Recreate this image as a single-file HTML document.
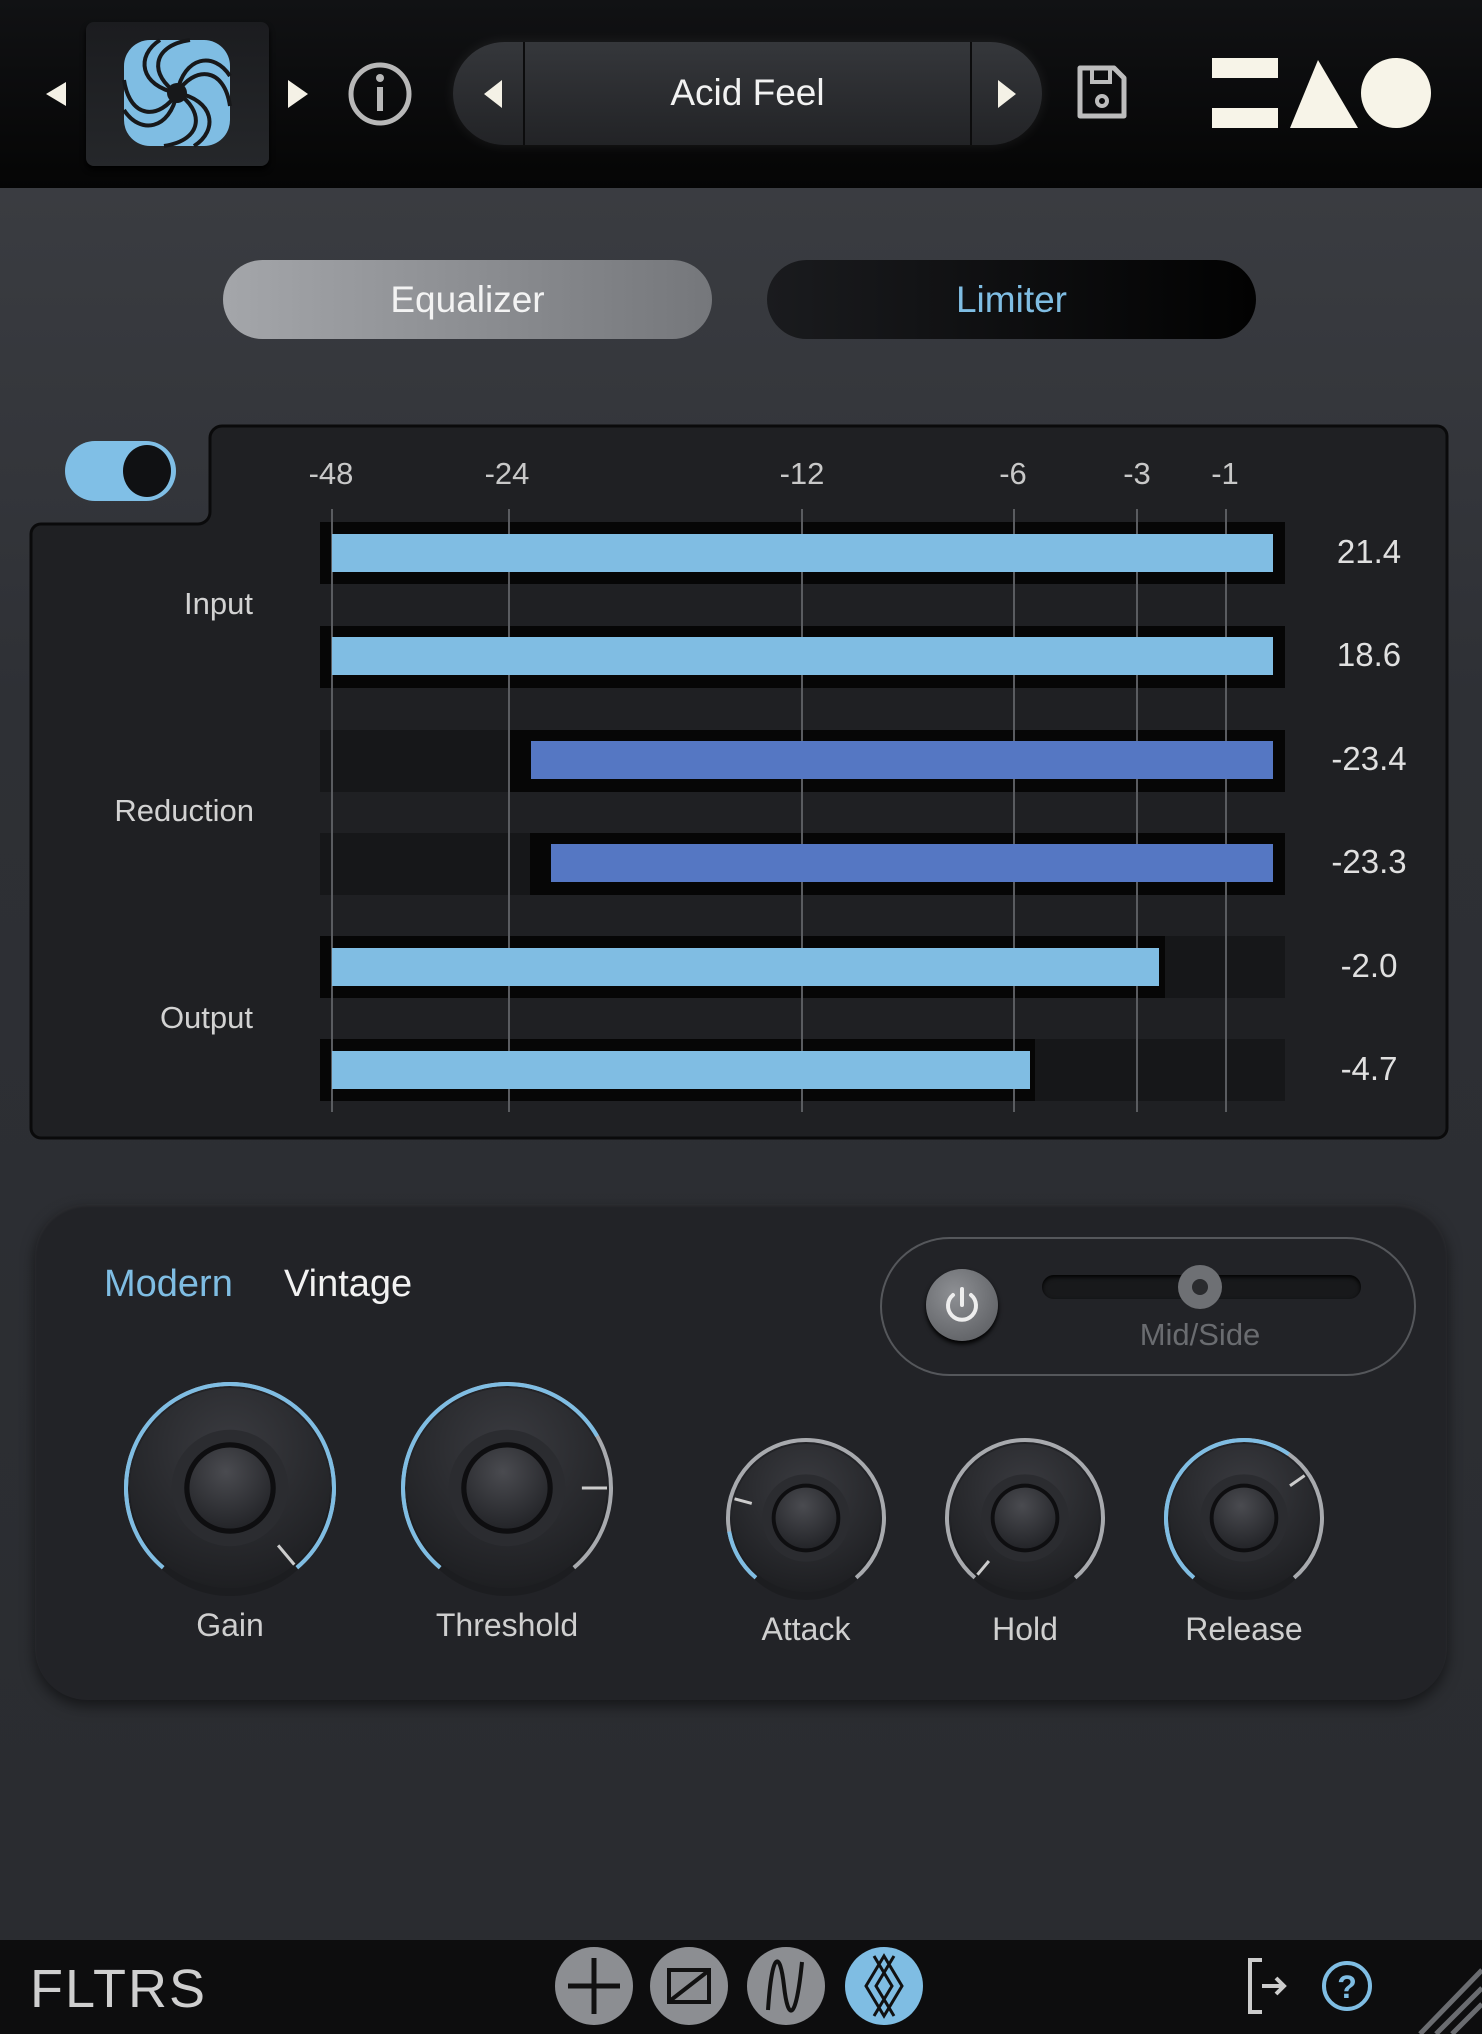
<!DOCTYPE html>
<html><head><meta charset="utf-8"><style>
*{margin:0;padding:0;box-sizing:border-box}
body{width:1482px;height:2034px;overflow:hidden;background:linear-gradient(180deg,#3a3c41 190px,#2e3035 700px,#2a2c30 1900px);font-family:"Liberation Sans",sans-serif;position:relative}
.a{position:absolute}
.t{position:absolute;white-space:nowrap}
</style></head><body>
<!-- header -->
<div class="a" style="left:0;top:0;width:1482px;height:188px;background:linear-gradient(180deg,#111214,#050505)"></div>
<div class="a" style="left:86px;top:22px;width:183px;height:144px;border-radius:8px;background:linear-gradient(180deg,#1b1c1f,#25272a);box-shadow:0 4px 6px #000"></div>
<div class="a" style="left:453px;top:42px;width:589px;height:103px;border-radius:52px;background:linear-gradient(180deg,#35373b,#222326);box-shadow:0 0 14px rgba(255,255,255,.08)"></div>
<div class="a" style="left:523px;top:42px;width:2px;height:103px;background:#0c0c0d"></div>
<div class="a" style="left:970px;top:42px;width:2px;height:103px;background:#0c0c0d"></div>
<svg class="a" style="left:0;top:0" width="1482" height="188">
<polygon points="66,82 46,94 66,106" fill="#f4f1e6"/>
<polygon points="288,80 308,94 288,108" fill="#f4f1e6"/>
<circle cx="380" cy="94" r="29" fill="none" stroke="#b8b8b8" stroke-width="5"/>
<circle cx="380" cy="78" r="4" fill="#b8b8b8"/><rect x="377" y="87" width="6" height="24" fill="#b8b8b8"/>
<polygon points="502,80 484,94 502,108" fill="#f4f1e6"/>
<polygon points="998,80 1016,94 998,108" fill="#f4f1e6"/>
<path d="M1080 68 h34 l10 10 v38 h-44 z" fill="none" stroke="#bdbdbd" stroke-width="5" stroke-linejoin="round"/>
<rect x="1092" y="68" width="18" height="14" fill="none" stroke="#bdbdbd" stroke-width="4"/>
<circle cx="1102" cy="101" r="5" fill="none" stroke="#bdbdbd" stroke-width="4"/>
<rect x="1212" y="58" width="66" height="20" fill="#f7f4e8"/>
<rect x="1212" y="108" width="66" height="20" fill="#f7f4e8"/>
<polygon points="1290,128 1318,60 1358,128" fill="#f7f4e8"/>
<ellipse cx="1396" cy="93" rx="35" ry="35" fill="#f7f4e8"/>
</svg>
<svg class="a" style="left:120px;top:36px" width="114" height="114" viewBox="0 0 114 114">
<rect x="4" y="4" width="106" height="106" rx="26" fill="#7fbde3"/>
<g fill="none" stroke="#17181a" stroke-width="4">
<path d="M57 57 C30 40 30 10 70 4"/><path d="M57 57 C74 30 104 30 110 70"/><path d="M57 57 C84 74 84 104 44 110"/><path d="M57 57 C40 84 10 84 4 44"/>
<path d="M57 57 C20 50 15 20 40 4"/><path d="M57 57 C64 20 94 15 110 40"/><path d="M57 57 C94 64 99 94 74 110"/><path d="M57 57 C50 94 20 99 4 74"/>
</g><circle cx="57" cy="57" r="10" fill="#17181a"/></svg>
<div class="t" style="left:525px;width:445px;top:72px;text-align:center;color:#f2f2f2;font-size:37px">Acid Feel</div>

<!-- tabs -->
<div class="a" style="left:223px;top:260px;width:489px;height:79px;border-radius:40px;background:linear-gradient(90deg,#a4a6aa,#75777b)"></div>
<div class="t" style="left:223px;width:489px;top:279px;text-align:center;color:#f3f3f3;font-size:37px">Equalizer</div>
<div class="a" style="left:767px;top:260px;width:489px;height:79px;border-radius:40px;background:linear-gradient(90deg,#1a1b1e,#020202)"></div>
<div class="t" style="left:767px;width:489px;top:279px;text-align:center;color:#7fbde3;font-size:37px">Limiter</div>

<!-- meter panel -->
<svg class="a" style="left:0;top:0" width="1482" height="1150">
<path d="M222 426 H1437 a10 10 0 0 1 10 10 V1128 a10 10 0 0 1 -10 10 H41 a10 10 0 0 1 -10 -10 V534 a10 10 0 0 1 10 -10 H198 a12 12 0 0 0 12 -12 V438 a12 12 0 0 1 12 -12 z" fill="#1f2023" stroke="#0a0a0b" stroke-width="3"/>
<rect x="65" y="441" width="111" height="60" rx="30" fill="#80bfe6"/>
<ellipse cx="147" cy="471" rx="24" ry="26" fill="#101113"/>
<g fill="#161719">
<rect x="320" y="522" width="965" height="62"/><rect x="320" y="626" width="965" height="62"/><rect x="320" y="730" width="965" height="62"/><rect x="320" y="833" width="965" height="62"/><rect x="320" y="936" width="965" height="62"/><rect x="320" y="1039" width="965" height="62"/>
</g>
<g fill="#060606">
<rect x="320" y="522" width="965" height="62"/><rect x="320" y="626" width="965" height="62"/>
<rect x="510" y="730" width="775" height="62"/><rect x="530" y="833" width="755" height="62"/>
<rect x="320" y="936" width="845" height="62"/><rect x="320" y="1039" width="715" height="62"/>
</g>
<g stroke="#5a5c60" stroke-width="2">
<line x1="332" y1="509" x2="332" y2="1112"/><line x1="509" y1="509" x2="509" y2="1112"/><line x1="802" y1="509" x2="802" y2="1112"/><line x1="1014" y1="509" x2="1014" y2="1112"/><line x1="1137" y1="509" x2="1137" y2="1112"/><line x1="1226" y1="509" x2="1226" y2="1112"/>
</g>
<rect x="332" y="534" width="941" height="38" fill="#80bde3"/>
<rect x="332" y="637" width="941" height="38" fill="#80bde3"/>
<rect x="531" y="741" width="742" height="38" fill="#5577c3"/>
<rect x="551" y="844" width="722" height="38" fill="#5577c3"/>
<rect x="332" y="948" width="827" height="38" fill="#80bde3"/>
<rect x="332" y="1051" width="698" height="38" fill="#80bde3"/>
<g fill="#c8c8c8" font-size="31" font-family="Liberation Sans" text-anchor="middle">
<text x="331" y="484">-48</text><text x="507" y="484">-24</text><text x="802" y="484">-12</text><text x="1013" y="484">-6</text><text x="1137" y="484">-3</text><text x="1225" y="484">-1</text>
</g>
<g fill="#e0e0e0" font-size="33" font-family="Liberation Sans" text-anchor="middle">
<text x="1369" y="563">21.4</text><text x="1369" y="666">18.6</text><text x="1369" y="770">-23.4</text><text x="1369" y="873">-23.3</text><text x="1369" y="977">-2.0</text><text x="1369" y="1080">-4.7</text>
</g>
<g fill="#d2d2d2" font-size="31" font-family="Liberation Sans" text-anchor="end">
<text x="253" y="614">Input</text><text x="254" y="821">Reduction</text><text x="253" y="1028">Output</text>
</g>
</svg>

<!-- bottom panel -->
<div class="a" style="left:35px;top:1204px;width:1412px;height:496px;border-radius:52px;background:#222327;box-shadow:0 6px 14px rgba(0,0,0,.5),inset 0 2px 3px rgba(255,255,255,.05)"></div>
<div class="t" style="left:104px;top:1263px;color:#7fbde3;font-size:38px">Modern</div>
<div class="t" style="left:284px;top:1263px;color:#f2f2f2;font-size:38px">Vintage</div>
<div class="a" style="left:880px;top:1237px;width:536px;height:139px;border-radius:70px;border:2px solid #55575b"></div>
<div class="a" style="left:926px;top:1269px;width:72px;height:72px;border-radius:50%;background:radial-gradient(circle at 40% 35%,#8e9094,#55575b);box-shadow:0 3px 5px #000"></div>
<svg class="a" style="left:926px;top:1269px" width="72" height="72"><path d="M27 26 a14 14 0 1 0 18 0" fill="none" stroke="#eee" stroke-width="4" stroke-linecap="round"/><line x1="36" y1="20" x2="36" y2="36" stroke="#eee" stroke-width="4" stroke-linecap="round"/></svg>
<div class="a" style="left:1042px;top:1275px;width:319px;height:24px;border-radius:12px;background:#18191b;box-shadow:inset 0 2px 4px #000"></div>
<div class="a" style="left:1178px;top:1265px;width:44px;height:44px;border-radius:50%;background:#6e7074"></div>
<div class="a" style="left:1192px;top:1279px;width:16px;height:16px;border-radius:50%;background:#2a2b2e"></div>
<div class="t" style="left:1100px;width:200px;text-align:center;top:1317px;color:#6a6c70;font-size:31px">Mid/Side</div>
<svg id="knobs" class="a" style="left:0;top:0" width="1482" height="1750"></svg>
<div class="t" style="left:130px;width:200px;text-align:center;top:1607px;color:#cfcfcf;font-size:32px">Gain</div>
<div class="t" style="left:407px;width:200px;text-align:center;top:1607px;color:#cfcfcf;font-size:32px">Threshold</div>
<div class="t" style="left:706px;width:200px;text-align:center;top:1611px;color:#cfcfcf;font-size:32px">Attack</div>
<div class="t" style="left:925px;width:200px;text-align:center;top:1611px;color:#cfcfcf;font-size:32px">Hold</div>
<div class="t" style="left:1144px;width:200px;text-align:center;top:1611px;color:#cfcfcf;font-size:32px">Release</div>

<!-- bottom bar -->
<div class="a" style="left:0;top:1940px;width:1482px;height:94px;background:#0d0d0e"></div>
<div class="t" style="left:30px;top:1958px;color:#cfcfcf;font-size:54px;font-family:'Liberation Sans Narrow','Liberation Sans',sans-serif;letter-spacing:2px">FLTRS</div>
<svg class="a" style="left:0;top:1940px" width="1482" height="94">
<circle cx="594" cy="46" r="39" fill="#8c8e92"/><circle cx="689" cy="46" r="39" fill="#8c8e92"/><circle cx="786" cy="46" r="39" fill="#8c8e92"/><circle cx="884" cy="46" r="39" fill="#7fbde3"/>
<path d="M594 18v56M568 46h52" stroke="#111" stroke-width="5"/>
<rect x="669" y="30" width="40" height="32" fill="none" stroke="#111" stroke-width="4"/><line x1="671" y1="60" x2="707" y2="32" stroke="#111" stroke-width="4"/>
<path d="M768 70 C772 10 780 10 784 46 C788 82 796 82 802 22" fill="none" stroke="#111" stroke-width="4"/>
<path d="M884 16 L866 46 L884 76 L902 46 Z M874 16 L892 46 L874 76 M894 16 L876 46 L894 76" fill="none" stroke="#111" stroke-width="3"/>
<path d="M1262 20 h-12 v52 h12" fill="none" stroke="#ccc" stroke-width="4"/><path d="M1262 46 h22 M1276 38 l8 8 l-8 8" fill="none" stroke="#ccc" stroke-width="4"/>
<circle cx="1347" cy="46" r="23" fill="none" stroke="#7fbde3" stroke-width="4"/>
<text x="1347" y="58" text-anchor="middle" fill="#7fbde3" font-size="32" font-family="Liberation Sans" font-weight="bold">?</text>
<path d="M1420 94 L1482 30 M1436 94 L1482 48 M1452 94 L1482 64" stroke="#6a6c70" stroke-width="5"/>
</svg>
<script>
var s=document.getElementById('knobs'),h='';
function pt(cx,cy,r,a){a=(a-90)*Math.PI/180;return [cx+r*Math.cos(a),cy+r*Math.sin(a)];}
function arc(cx,cy,r,a1,a2,c,w){if(a2-a1<0.5)return '';var p=pt(cx,cy,r,a1),q=pt(cx,cy,r,a2);return '<path d="M'+p[0]+' '+p[1]+' A'+r+' '+r+' 0 '+((a2-a1)>180?1:0)+' 1 '+q[0]+' '+q[1]+'" fill="none" stroke="'+c+'" stroke-width="'+w+'"/>';}
function knob(cx,cy,R,v,pa){
 h+='<circle cx="'+cx+'" cy="'+(cy+8)+'" r="'+(R-4)+'" fill="#1a1b1e" opacity=".7"/>';
 h+='<circle cx="'+cx+'" cy="'+cy+'" r="'+(R-4)+'" fill="url(#kg)"/>';
 h+=arc(cx,cy,R,-140,140,'#a8aaae',4)+arc(cx,cy,R,-140,v,'#7fbde3',4);
 h+='<circle cx="'+cx+'" cy="'+cy+'" r="'+(R*0.56)+'" fill="#2b2c30"/>';
 h+='<circle cx="'+cx+'" cy="'+cy+'" r="'+(R*0.44)+'" fill="#0e0e10"/>';
 h+='<circle cx="'+cx+'" cy="'+cy+'" r="'+(R*0.39)+'" fill="url(#kc)"/>';
 var a=pt(cx,cy,R*0.72,pa),b=pt(cx,cy,R-4,pa);
 h+='<line x1="'+a[0]+'" y1="'+a[1]+'" x2="'+b[0]+'" y2="'+b[1]+'" stroke="#ccc" stroke-width="3"/>';
}
h+='<defs><radialGradient id="kg" cx="50%" cy="30%" r="70%"><stop offset="0" stop-color="#3a3b40"/><stop offset="1" stop-color="#1e1f22"/></radialGradient><radialGradient id="kc" cx="45%" cy="30%" r="70%"><stop offset="0" stop-color="#4a4b50"/><stop offset="1" stop-color="#242529"/></radialGradient></defs>';
knob(230,1488,104,140,140);
knob(507,1488,104,60,90);
knob(806,1518,78,-100,-75);
knob(1025,1518,78,-140,-140);
knob(1244,1518,78,35,55);
s.innerHTML=h;
</script>
</body></html>
